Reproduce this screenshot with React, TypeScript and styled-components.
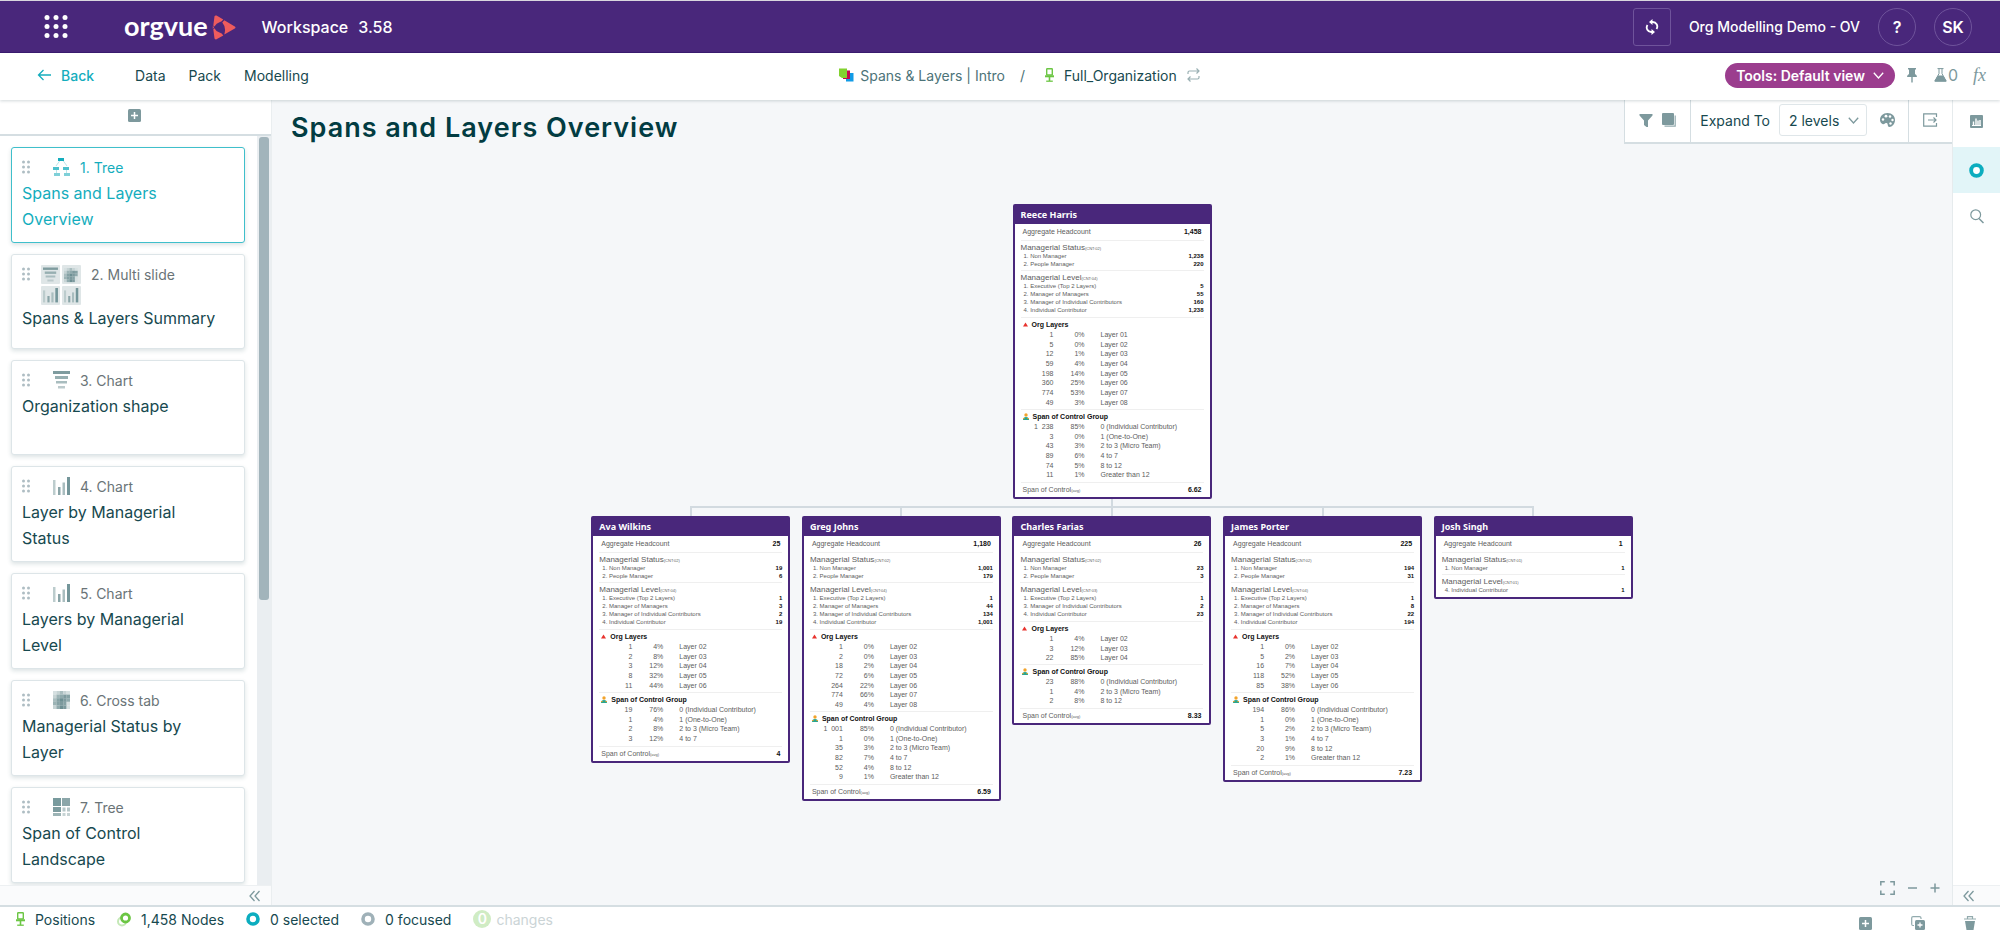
import React from "react";
import styled, { createGlobalStyle } from "styled-components";

const ink = "#17494f";
const muted = "#7d999d";
const teal = "#14adbd";
const purple = "#49277b";
const line = "#d5dee2";

const GlobalStyle = createGlobalStyle`
  *, *::before, *::after { box-sizing: border-box; }
  body {
    margin: 0;
    font-family: Inter, "Liberation Sans", sans-serif;
    font-size: 14px;
    color: ${ink};
    background: #fff;
  }
  button, select { font: inherit; color: inherit; }
  button { border: 0; padding: 0; background: none; display: inline-flex; align-items: center; justify-content: center; cursor: pointer; }
  a { color: inherit; text-decoration: none; }
  h1, h2, h3, p { margin: 0; font-weight: inherit; font-size: inherit; }
  ul, ol { margin: 0; padding: 0; list-style: none; }
  svg { display: block; flex: none; }
`;

/* ---------- page frame ---------- */

const Page = styled.div`
  display: flex;
  flex-direction: column;
  height: 100vh;
  min-height: 600px;
  overflow: hidden;
`;

const TopBar = styled.header`
  display: flex;
  align-items: center;
  flex: none;
  height: 53px;
  padding: 0 28px 0 44px;
  color: #fff;
  background: ${purple};
  border-top: 1px solid #d9d6de;
  border-bottom: 1px solid #3a1a70;
`;

const Brand = styled.a`
  display: flex;
  align-items: center;
  gap: 4px;
  margin-left: 56px;
  font: 700 27px/36px Lato, "Liberation Sans", sans-serif;
  svg { margin-top: 1px; }
`;

const BrandName = styled.span`
  height: 38px;
`;

const Product = styled.p`
  display: flex;
  gap: 10px;
  margin-left: 26px;
  font-size: 16px;
  font-weight: 500;
`;

const TopRight = styled.div`
  display: flex;
  align-items: center;
  gap: 18px;
  margin-left: auto;
`;

const Outlined = styled.button<{ $round?: boolean }>`
  width: 38px;
  height: 38px;
  border: 1px solid #6f539b;
  border-radius: ${(p) => (p.$round ? "50%" : "3px")};
  font-size: 16px;
  font-weight: 600;
`;

const Tenant = styled.span`
  font-size: 14px;
  font-weight: 500;
`;

const NavBar = styled.nav`
  position: relative;
  display: grid;
  grid-template-columns: 1fr auto 1fr;
  align-items: center;
  flex: none;
  height: 47px;
  padding: 0 14px 3px 37px;
  background: #fff;
  box-shadow: 0 1px 3px rgba(30, 60, 70, 0.2);
`;

const NavGroup = styled.div<{ $end?: boolean }>`
  display: flex;
  align-items: center;
  gap: ${(p) => (p.$end ? "12px" : "23px")};
  justify-content: ${(p) => (p.$end ? "flex-end" : "flex-start")};
`;

const BackLink = styled.a`
  display: flex;
  align-items: center;
  gap: 9px;
  margin-right: 18px;
  color: ${teal};
  font-weight: 500;
`;

const Crumbs = styled.div`
  display: flex;
  align-items: center;
  margin-left: 16px;
  color: #4c7378;
`;

const Crumb = styled.a<{ $current?: boolean }>`
  display: flex;
  align-items: center;
  gap: ${(p) => (p.$current ? "10px" : "6px")};
  color: ${(p) => (p.$current ? ink : "#4c7378")};
`;

const Slash = styled.span`
  margin: 0 20px 0 15px;
`;

const SwapButton = styled.button`
  margin-left: 10px;
`;

const ToolsButton = styled.button`
  gap: 8px;
  height: 25px;
  padding: 0 11px;
  border-radius: 13px;
  color: #fff;
  font-weight: 600;
  background: #9b3d8e;
`;

const Flask = styled.button`
  gap: 1px;
  color: ${muted};
  font-size: 16px;
  margin: 0 3px 0 5px;
`;

const Body = styled.div`
  display: flex;
  flex: 1;
  min-height: 0;
`;

/* ---------- slide list ---------- */

const Slides = styled.aside`
  display: flex;
  flex-direction: column;
  flex: none;
  width: 272px;
  border-right: 1px solid #eaeef0;
`;

const AddSlide = styled.div`
  display: flex;
  justify-content: center;
  align-items: center;
  flex: none;
  height: 36px;
  padding: 0 2px 3px 0;
  border-bottom: 2px solid ${line};
`;

const SlideScroll = styled.div`
  display: flex;
  flex: 1;
  min-height: 0;
  overflow: hidden;
`;

const SlideList = styled.ol`
  display: flex;
  flex-direction: column;
  flex: 1;
  gap: 11px;
  padding: 11px 12px 0 11px;
`;

const Track = styled.div`
  width: 14px;
  padding: 1px 2px;
  background: #eaeef1;
`;

const Thumb = styled.div`
  height: 62%;
  border-radius: 3px;
  background: #a2b4bb;
`;

const SlideCard = styled.li<{ $active?: boolean }>`
  flex: none;
  min-height: 95px;
  padding: 10px;
  color: ${(p) => (p.$active ? teal : ink)};
  border: 1px solid ${(p) => (p.$active ? "#3fbfcb" : "#dde5e8")};
  border-radius: 3px;
  box-shadow: 0 2px 4px rgba(40, 80, 90, 0.16);
  background: #fff;
`;

const SlideMeta = styled.div<{ $active?: boolean }>`
  display: flex;
  align-items: flex-start;
  min-height: 22px;
  line-height: 20px;
  color: ${(p) => (p.$active ? teal : "#6a7477")};
`;

const Glyph = styled.span<{ $wide?: boolean }>`
  margin: 0 10px 0 ${(p) => (p.$wide ? "11px" : "23px")};
`;

const Grip = styled.span`
  padding-top: 2px;
`;

const SlideTitle = styled.h3`
  padding-right: 12px;
  font-size: 16px;
  line-height: 26px;
`;

const Collapse = styled.div<{ $left?: boolean }>`
  display: flex;
  align-items: center;
  justify-content: ${(p) => (p.$left ? "flex-start" : "flex-end")};
  flex: none;
  height: 20px;
  padding: 0 11px 0 10px;
  background: #fafbfc;
  border-top: 1px solid #edf0f2;
`;

/* ---------- canvas ---------- */

const Canvas = styled.main`
  display: flex;
  flex-direction: column;
  flex: 1;
  min-width: 0;
  background: #f5f7f9;
`;

const CanvasHead = styled.div`
  display: flex;
  justify-content: space-between;
  align-items: flex-start;
`;

const Title = styled.h1`
  padding: 10px 0 0 19px;
  font-size: 27px;
  line-height: 36px;
  font-weight: 600;
  letter-spacing: 1px;
  color: #023c42;
`;

const Toolbar = styled.div`
  display: flex;
  height: 44px;
  background: #fff;
  border: solid ${line};
  border-width: 0 0 2px 1px;
`;

const ToolCell = styled.div`
  display: flex;
  align-items: center;
  gap: 9px;
  padding: 0 14px 2px;
  & + & { border-left: 1px solid ${line}; padding-left: 9px; padding-right: 13px; }
  & + & + & { padding-left: 14px; padding-right: 14px; }
`;

const SelectBox = styled.span`
  position: relative;
  margin-right: 4px;
  select {
    appearance: none;
    width: 88px;
    height: 32px;
    padding: 0 0 0 9px;
    border: 1px solid #dfe6e9;
    border-radius: 3px;
    background: #fff;
  }
  svg { position: absolute; right: 8px; top: 13px; pointer-events: none; }
`;

const Tree = styled.div`
  display: flex;
  flex-direction: column;
  align-items: center;
  width: 1042px;
  margin: 58px auto 0;
`;

const Stub = styled.div`
  width: 2px;
  height: 8px;
  background: #d2dae0;
`;

const Trunk = styled(Stub)`
  height: 7px;
`;

const Rail = styled.div`
  align-self: stretch;
  height: 2px;
  margin: 0 99px;
  background: #d2dae0;
`;

const Reports = styled.div`
  display: grid;
  grid-template-columns: repeat(5, 1fr);
  gap: 11px;
  align-self: stretch;
  align-items: start;
`;

const Branch = styled.div`
  display: flex;
  flex-direction: column;
  align-items: center;
`;

const Node = styled.article`
  width: 199px;
  border: 2px solid ${purple};
  border-radius: 2px;
  color: #5d5d5d;
  background: #fff;
  font: 7px/10px "Liberation Sans", Arial, sans-serif;
`;

const NodeName = styled.h2`
  height: 18px;
  padding-left: 6px;
  color: #fff;
  background: ${purple};
  font: 700 9px/18px "Noto Sans", "Liberation Sans", sans-serif;
`;

const Block = styled.section<{ $foot?: number }>`
  margin: 0 6px;
  padding-bottom: ${(p) => p.$foot ?? 0}px;
  & + & { border-top: 1px solid #efefef; }
`;

const Figure = styled.p<{ $last?: boolean }>`
  display: flex;
  justify-content: space-between;
  height: ${(p) => (p.$last ? "14px" : "16px")};
  padding: ${(p) => (p.$last ? "1px" : "2px")} 2px 0;
  line-height: 11px;
  b { color: #111; }
  small { font-size: 4px; }
`;

const GroupTitle = styled.h3<{ $strong?: boolean }>`
  display: flex;
  align-items: center;
  gap: ${(p) => (p.$strong ? "4px" : "0")};
  height: 11px;
  padding: ${(p) => (p.$strong ? "2px 0 0 2px" : "2px 0 0")};
  font-size: ${(p) => (p.$strong ? "7px" : "8px")};
  font-weight: ${(p) => (p.$strong ? 700 : 400)};
  color: ${(p) => (p.$strong ? "#111" : "#5d5d5d")};
  small { font-size: 4px; padding-top: 2px; }
`;

const CountRow = styled.p`
  display: flex;
  justify-content: space-between;
  padding-left: 3px;
  font-size: 6px;
  line-height: 8px;
  b { color: #111; }
`;

const ShareTable = styled.table`
  border-collapse: collapse;
  td { padding: 0; height: 10px; line-height: 9px; text-align: right; white-space: pre; }
  tr:nth-child(3n) td { height: 9px; }
  td:nth-child(1) { width: 33px; }
  td:nth-child(2) { width: 31px; }
  td:nth-child(3) { padding-left: 16px; text-align: left; }
`;

const ZoomTools = styled.div`
  display: flex;
  align-items: center;
  justify-content: flex-end;
  gap: 11px;
  margin-top: auto;
  padding: 0 12px 10px;
`;

/* ---------- right rail and status bar ---------- */

const SideRail = styled.aside`
  display: flex;
  flex-direction: column;
  flex: none;
  width: 48px;
  border-left: 1px solid #e6ebed;
  background: #fff;
`;

const RailButton = styled.button<{ $active?: boolean }>`
  flex: none;
  height: 46px;
  background: ${(p) => (p.$active ? "#e2f5f8" : "transparent")};
  &:first-child { height: 47px; padding-bottom: 4px; }
`;

const RailFill = styled.div`
  flex: 1;
`;

const StatusBar = styled.footer`
  display: flex;
  align-items: center;
  flex: none;
  gap: 22px;
  height: 34px;
  padding: 0 24px 8px 16px;
  border-top: 2px solid ${line};
  background: #fff;
`;

const Status = styled.span<{ $faded?: boolean }>`
  display: flex;
  align-items: center;
  gap: ${(p) => (p.$faded ? "5px" : "10px")};
  color: ${(p) => (p.$faded ? "#cbd4d6" : ink)};
`;

const ChangeCount = styled.span`
  width: 18px;
  height: 18px;
  border-radius: 50%;
  color: #fff;
  font-size: 14px;
  font-weight: 600;
  line-height: 18px;
  text-align: center;
  background: #d0ecc4;
`;

const StatusTools = styled.div`
  display: flex;
  align-items: center;
  gap: 39px;
  margin: 8px 0 0 auto;
`;

/* ---------- icons ---------- */

const AppsIcon = () => (
  <svg width="24" height="25" viewBox="0 0 24 25" fill="#fff">
    {[3, 12, 21].map((y) => [3, 12, 21].map((x) => <circle key={`${x}-${y}`} cx={x} cy={y + 0.5} r="2.5" />))}
  </svg>
);

const BrandMark = () => (
  <svg width="24" height="25" viewBox="0 0 24 25" fill="#ee5b5d">
    <path d="M2.500 1.200Q3.200 0 4.500.6L11.300 4.500Q10 6.800 7.500 7.200 4.500 8 2.400 11.500L1.300 10.500z" />
    <path d="M1.300 14.200 2.400 13.200Q4.500 17 7.500 17.600 10 18 11.300 20.400L4.500 24.200Q3.200 24.800 2.500 23.600z" />
    <path d="M12.300 5.200 22.800 11.400Q24.200 12.400 22.800 13.400L12.300 19.500Q14.500 12.300 10.300 7.400z" />
    <path d="M.8 10.800 2 12.300.8 13.900z" />
  </svg>
);

const SyncIcon = () => (
  <svg width="14" height="16" viewBox="0 0 14 16" fill="none" stroke="#fff" strokeWidth="1.800">
    <path d="M6.500 3H7.500a4.500 4.500 0 0 1 4 7M7.500 13H6.500a4.500 4.500 0 0 1-4-7" />
    <path d="M7.500 0v6L4 3zM6.500 16v-6L10 13z" fill="#fff" stroke="none" />
  </svg>
);

const ArrowLeft = () => (
  <svg width="15" height="12" viewBox="0 0 15 12" fill="none" stroke={teal} strokeWidth="1.300">
    <path d="M6.500 1 1.500 6l5 5M1.500 6H14" />
  </svg>
);

const PackIcon = () => (
  <svg width="15" height="14" viewBox="0 0 15 14">
    <rect x="7" y="5" width="7.500" height="8.500" fill="#129be6" />
    <rect x="4" y="2.500" width="7" height="8.500" fill="#c4064f" />
    <path d="M0 .5h8v9.500H3L0 8z" fill="#82d12f" />
  </svg>
);

const ChairIcon = () => (
  <svg width="9" height="14" viewBox="0 0 9 14" fill="none" stroke="#6cc644">
    <rect x="1.700" y=".7" width="5.600" height="6.300" rx=".5" strokeWidth="1.400" />
    <path d="M0 8.300h9" strokeWidth="2" />
    <path d="M4.500 8v5" strokeWidth="1.600" />
    <path d="M1.200 13.200h6.600" strokeWidth="1.300" />
  </svg>
);

const SwapIcon = () => (
  <svg width="13" height="14" viewBox="0 0 13 14" fill="none" stroke="#9ab0b3" strokeWidth="1.200">
    <path d="M1 6V4.500Q1 3 2.500 3H12M9.500.5 12 3 9.500 5.500M12 8v1.500Q12 11 10.500 11H1M3.500 8.500 1 11l2.500 2.500" />
  </svg>
);

const Chevron = ({ color }: { color: string }) => (
  <svg width="11" height="7" viewBox="0 0 11 7" fill="none" stroke={color} strokeWidth="1.300">
    <path d="M.8.8 5.500 6 10.200.8" />
  </svg>
);

const PinIcon = () => (
  <svg width="10" height="15" viewBox="0 0 10 15" fill={muted}>
    <path d="M1 0h8v1.500H8V6q2 1 2 3H0q0-2 2-3V1.500H1zM4.300 9h1.400v5L5 15l-.7-1z" />
  </svg>
);

const FlaskIcon = () => (
  <svg width="13" height="14" viewBox="0 0 13 14" fill="none" stroke={muted}>
    <path d="M3.500.6h6M5 .6v5L.8 13.200h11.400L8 5.600v-5" />
    <path d="M4 8h5l3 5H1z" fill={muted} />
  </svg>
);

const Fx = styled.i`
  font: italic 18px/18px "Liberation Serif", serif;
  color: ${muted};
`;

const PlusSquare = () => (
  <svg width="13" height="13" viewBox="0 0 13 13">
    <rect width="13" height="13" rx="1.500" fill={muted} />
    <path d="M6.500 3v7M3 6.500h7" stroke="#fff" strokeWidth="1.500" />
  </svg>
);

const GripIcon = () => (
  <svg width="8" height="14" viewBox="0 0 8 14" fill="#aebdc3">
    {[2, 7, 12].map((y) => [1.5, 6.5].map((x) => <circle key={`${x}-${y}`} cx={x} cy={y} r="1.500" />))}
  </svg>
);

const DoubleChevron = () => (
  <svg width="11" height="12" viewBox="0 0 11 12" fill="none" stroke={muted} strokeWidth="1.300">
    <path d="M5.500 1 1 6l4.500 5M10.500 1 6 6l4.500 5" />
  </svg>
);

const TreeGlyph = () => (
  <svg width="17" height="18" viewBox="0 0 17 18">
    <path d="M7 2.500 3 8M10 2.500 14 8M3.500 10v6M13.500 10v6" stroke="#b9e6eb" />
    <path d="M5 0h6v3H5z" fill={teal} />
    <path d="M0 9h6v3H0zM10 9h6v3h-6z" fill="#4cc0cc" />
    <path d="M1 15h6v3H1zM11 15h6v3h-6z" fill="#7fd0d8" />
  </svg>
);

const FunnelBars = () => (
  <>
    <path d="M0 0h17v3H0z" fill="#7f9c9f" />
    <path d="M2 5h13v3H2z" fill="#97afb1" />
    <path d="M3 10h11v2.500H3z" fill="#a9bdbf" />
    <path d="M5 15h7v2.500H5z" fill="#bccacc" />
  </>
);

const ColumnBars = () => (
  <>
    <path d="M0 3h2.500v15H0z" fill="#bccccd" />
    <path d="M5 10h2.500v8H5z" fill="#8aa5a8" />
    <path d="M9.500 5.500H12V18H9.500z" fill="#a9bdbf" />
    <path d="M14 0h3v18h-3z" fill="#74969a" />
  </>
);

const FunnelGlyph = () => (
  <svg width="17" height="18" viewBox="0 0 17 18"><FunnelBars /></svg>
);

const ColumnGlyph = () => (
  <svg width="17" height="18" viewBox="0 0 17 18"><ColumnBars /></svg>
);

const heat = ["cb9bc", "b8756", "96457", "8656c", "b745c"];
const shade: Record<string, string> = {
  c: "#d6e0e1", b: "#c6d3d4", "9": "#a9bdbf", "8": "#9cb3b5", "7": "#90aaad", "6": "#86a2a5", "5": "#7d9a9e", "4": "#6d8f93",
};

const HeatCells = () => (
  <>
    {heat.map((row, y) =>
      row.split("").map((c, x) => <rect key={`${x}-${y}`} x={x * 3.4} y={y * 3.6} width="3.500" height="3.700" fill={shade[c]} />)
    )}
  </>
);

const CrossGlyph = () => (
  <svg width="17" height="18" viewBox="0 0 17 18"><HeatCells /></svg>
);

const TreemapGlyph = () => (
  <svg width="17" height="18" viewBox="0 0 17 18" fill="#8ba6a9">
    <path d="M0 0h8v8H0z" fill="#789a9d" />
    <path d="M9 0h8v8H9z" />
    <path d="M0 9h8v5H0z" fill="#7d9c9f" />
    <path d="M0 15h8v3H0z" fill="#9cb3b5" />
    <path d="M9.500 9.500h3v4h-3zM14 9.500h3v4h-3z" fill="#b5c6c8" />
    <path d="M9.500 15h3v3h-3zM14 15h3v3h-3z" fill="#c6d3d4" />
  </svg>
);

const MultiGlyph = () => (
  <svg width="40" height="40" viewBox="0 0 40 40">
    {[[0, 0], [21, 0], [0, 21], [21, 21]].map(([x, y]) => (
      <rect key={`${x}-${y}`} x={x} y={y} width="19" height="19" rx="1" fill="#dfe6e7" />
    ))}
    <g transform="translate(2 2.500) scale(.88 .8)"><FunnelBars /></g>
    <g transform="translate(23 3) scale(.8 .78)"><HeatCells /></g>
    <g transform="translate(2 23) scale(.88 .8)"><ColumnBars /></g>
    <g transform="translate(23 23) scale(.84 .8)"><ColumnBars /></g>
  </svg>
);

const FilterIcon = () => (
  <svg width="14" height="13" viewBox="0 0 14 13" fill={muted}>
    <path d="M.5 0h13v1.500L9 6.500V13H7.500L5 11V6.500L.5 1.500z" />
  </svg>
);

const LayersIcon = () => (
  <svg width="14" height="14" viewBox="0 0 14 14">
    <path d="M13.200 2.500v10.700H2.500" fill="none" stroke="#93abae" strokeWidth="1.200" />
    <rect width="12" height="12" rx="1" fill={muted} />
  </svg>
);

const PaletteIcon = () => (
  <svg width="15" height="14" viewBox="0 0 15 14">
    <path d="M7.500 0C12 0 15 3 15 7s-3 7-5.500 7C7 14 8.500 10.500 6.500 10 4.500 9.500 4.500 12 2.500 11 .8 10 0 8.500 0 7c0-4 3-7 7.500-7z" fill={muted} />
    <g fill="#fff">
      <circle cx="6" cy="3.200" r="1.400" />
      <circle cx="10" cy="3.500" r="1.300" />
      <circle cx="3" cy="6.500" r="1.200" />
      <circle cx="12.500" cy="7" r="1.200" />
      <circle cx="10.500" cy="10.500" r="1.200" />
    </g>
  </svg>
);

const ExportIcon = () => (
  <svg width="15" height="14" viewBox="0 0 15 14" fill="none" stroke={muted} strokeWidth="1.200">
    <path d="M13.500 4V.8H.7v12.400h12.800V10M5 7h8M10.500 4.500 13 7l-2.500 2.500" />
  </svg>
);

const PanelChartIcon = () => (
  <svg width="13" height="13" viewBox="0 0 13 13">
    <rect width="13" height="13" rx="1" fill={muted} />
    <path d="M3.500 10V6.500M6 10V3.500M8 10V5.500M10 10V5" stroke="#fff" strokeWidth="1.400" />
    <path d="M2 10.500h9" stroke="#fff" />
  </svg>
);

const RingIcon = ({ color, size = 14 }: { color: string; size?: number }) => (
  <svg width={size} height={size} viewBox="0 0 14 14">
    <circle cx="7" cy="7" r="5" fill="#fff" stroke={color} strokeWidth="3.600" />
  </svg>
);

const SearchIcon = () => (
  <svg width="14" height="15" viewBox="0 0 14 15" fill="none" stroke={muted} strokeWidth="1.200">
    <circle cx="5.700" cy="5.700" r="4.900" />
    <path d="m9 9.500 4.500 4.500" strokeWidth="1.500" />
  </svg>
);

const FitIcon = () => (
  <svg width="15" height="14" viewBox="0 0 15 14" fill="none" stroke={muted} strokeWidth="1.500">
    <path d="M.8 4.500V.8h4M10.200.8h4v3.700M14.200 9.500v3.700h-4M4.800 13.200h-4V9.500" />
  </svg>
);

const MinusIcon = () => (
  <svg width="13" height="10" viewBox="0 0 13 10" stroke={muted} strokeWidth="1.500"><path d="M2 5h9" /></svg>
);

const PlusIcon = () => (
  <svg width="10" height="10" viewBox="0 0 10 10" stroke={muted} strokeWidth="1.500"><path d="M.5 5h9M5 .5v9" /></svg>
);

const NodesIcon = () => (
  <svg width="14" height="15" viewBox="0 0 14 15" fill="none">
    <circle cx="5" cy="9.500" r="4" stroke="#c4e8b6" strokeWidth="2" />
    <circle cx="8.500" cy="6" r="4" fill="#fff" stroke="#6cc644" strokeWidth="2.800" />
  </svg>
);

const CopyAddIcon = () => (
  <svg width="14" height="14" viewBox="0 0 14 14">
    <path d="M3 9.500H2Q.7 9.500.7 8V2Q.7.700 2 .7h6.500Q10 .7 10 2v1" fill="none" stroke="#92abae" strokeWidth="1.200" />
    <rect x="4" y="4" width="10" height="10" rx="1.500" fill={muted} />
    <path d="M9 6.500v5M6.500 9h5" stroke="#fff" strokeWidth="1.300" />
  </svg>
);

const TrashIcon = () => (
  <svg width="12" height="14" viewBox="0 0 12 14">
    <path d="M3.500 2.500V.6h5v1.900M0 3h12" fill="none" stroke="#93abae" strokeWidth="1.200" />
    <path d="M1 5h10l-1.500 9h-7z" fill={muted} />
  </svg>
);

const RedTriangle = () => (
  <svg width="5" height="5" viewBox="0 0 5 5"><path d="M2.500.5 5 4.500H0z" fill="#e8322d" /></svg>
);

const PersonIcon = () => (
  <svg width="6" height="7" viewBox="0 0 6 7">
    <circle cx="3" cy="2" r="1.700" fill="#f2a32b" />
    <path d="M0 7q0-3 3-3t3 3z" fill="#2ba58d" />
    <path d="M0 5.500h1.500M4.500 5.500H6" stroke="#f2a32b" />
  </svg>
);

/* ---------- data ---------- */

type Pair = [string, string];
type Share = [string, string, string];

interface Person {
  name: string;
  headcount: string;
  status: Pair[];
  level: Pair[];
  layers?: Share[];
  spans?: Share[];
  span?: string;
}

const NM = "1. Non Manager";
const PM = "2. People Manager";
const L1 = "1. Executive (Top 2 Layers)";
const L2 = "2. Manager of Managers";
const L3 = "3. Manager of Individual Contributors";
const L4 = "4. Individual Contributor";
const S0 = "0 (Individual Contributor)";
const S1 = "1 (One-to-One)";
const S2 = "2 to 3 (Micro Team)";
const S4 = "4 to 7";
const S8 = "8 to 12";
const S12 = "Greater than 12";

const lead: Person = {
  name: "Reece Harris",
  headcount: "1,458",
  status: [[NM, "1,238"], [PM, "220"]],
  level: [[L1, "5"], [L2, "55"], [L3, "160"], [L4, "1,238"]],
  layers: [
    ["1", "0%", "Layer 01"], ["5", "0%", "Layer 02"], ["12", "1%", "Layer 03"], ["59", "4%", "Layer 04"],
    ["198", "14%", "Layer 05"], ["360", "25%", "Layer 06"], ["774", "53%", "Layer 07"], ["49", "3%", "Layer 08"],
  ],
  spans: [["1  238", "85%", S0], ["3", "0%", S1], ["43", "3%", S2], ["89", "6%", S4], ["74", "5%", S8], ["11", "1%", S12]],
  span: "6.62",
};

const reports: Person[] = [
  {
    name: "Ava Wilkins",
    headcount: "25",
    status: [[NM, "19"], [PM, "6"]],
    level: [[L1, "1"], [L2, "3"], [L3, "2"], [L4, "19"]],
    layers: [["1", "4%", "Layer 02"], ["2", "8%", "Layer 03"], ["3", "12%", "Layer 04"], ["8", "32%", "Layer 05"], ["11", "44%", "Layer 06"]],
    spans: [["19", "76%", S0], ["1", "4%", S1], ["2", "8%", S2], ["3", "12%", S4]],
    span: "4",
  },
  {
    name: "Greg Johns",
    headcount: "1,180",
    status: [[NM, "1,001"], [PM, "179"]],
    level: [[L1, "1"], [L2, "44"], [L3, "134"], [L4, "1,001"]],
    layers: [
      ["1", "0%", "Layer 02"], ["2", "0%", "Layer 03"], ["18", "2%", "Layer 04"], ["72", "6%", "Layer 05"],
      ["264", "22%", "Layer 06"], ["774", "66%", "Layer 07"], ["49", "4%", "Layer 08"],
    ],
    spans: [["1  001", "85%", S0], ["1", "0%", S1], ["35", "3%", S2], ["82", "7%", S4], ["52", "4%", S8], ["9", "1%", S12]],
    span: "6.59",
  },
  {
    name: "Charles Farias",
    headcount: "26",
    status: [[NM, "23"], [PM, "3"]],
    level: [[L1, "1"], [L3, "2"], [L4, "23"]],
    layers: [["1", "4%", "Layer 02"], ["3", "12%", "Layer 03"], ["22", "85%", "Layer 04"]],
    spans: [["23", "88%", S0], ["1", "4%", S2], ["2", "8%", S8]],
    span: "8.33",
  },
  {
    name: "James Porter",
    headcount: "225",
    status: [[NM, "194"], [PM, "31"]],
    level: [[L1, "1"], [L2, "8"], [L3, "22"], [L4, "194"]],
    layers: [["1", "0%", "Layer 02"], ["5", "2%", "Layer 03"], ["16", "7%", "Layer 04"], ["118", "52%", "Layer 05"], ["85", "38%", "Layer 06"]],
    spans: [["194", "86%", S0], ["1", "0%", S1], ["5", "2%", S2], ["3", "1%", S4], ["20", "9%", S8], ["2", "1%", S12]],
    span: "7.23",
  },
  { name: "Josh Singh", headcount: "1", status: [[NM, "1"]], level: [[L4, "1"]] },
];

const slides = [
  { kind: "Tree", title: "Spans and Layers Overview", icon: <TreeGlyph /> },
  { kind: "Multi slide", title: "Spans & Layers Summary", icon: <MultiGlyph />, wide: true },
  { kind: "Chart", title: "Organization shape", icon: <FunnelGlyph /> },
  { kind: "Chart", title: "Layer by Managerial Status", icon: <ColumnGlyph /> },
  { kind: "Chart", title: "Layers by Managerial Level", icon: <ColumnGlyph /> },
  { kind: "Cross tab", title: "Managerial Status by Layer", icon: <CrossGlyph /> },
  { kind: "Tree", title: "Span of Control Landscape", icon: <TreemapGlyph /> },
];

/* ---------- composed parts ---------- */

const CountBlock = ({ title, rows, foot }: { title: string; rows: Pair[]; foot: number }) => (
  <Block $foot={foot}>
    <GroupTitle>{title}<small>(CNT:0{rows.length})</small></GroupTitle>
    {rows.map(([label, value]) => (
      <CountRow key={label}><span>{label}</span><b>{value}</b></CountRow>
    ))}
  </Block>
);

const ShareBlock = ({ title, icon, rows, foot }: { title: string; icon: React.ReactNode; rows: Share[]; foot: number }) => (
  <Block $foot={foot}>
    <GroupTitle $strong>{icon}{title}</GroupTitle>
    <ShareTable>
      <tbody>
        {rows.map(([count, share, label]) => (
          <tr key={label}><td>{count}</td><td>{share}</td><td>{label}</td></tr>
        ))}
      </tbody>
    </ShareTable>
  </Block>
);

const PersonNode = ({ person }: { person: Person }) => (
  <Node>
    <NodeName>{person.name}</NodeName>
    <Block>
      <Figure><span>Aggregate Headcount</span><b>{person.headcount}</b></Figure>
    </Block>
    <CountBlock title="Managerial Status" rows={person.status} foot={2} />
    <CountBlock title="Managerial Level" rows={person.level} foot={3} />
    {person.layers && <ShareBlock title="Org Layers" icon={<RedTriangle />} rows={person.layers} foot={2} />}
    {person.spans && <ShareBlock title="Span of Control Group" icon={<PersonIcon />} rows={person.spans} foot={3} />}
    {person.span && (
      <Block>
        <Figure $last><span>Span of Control<small>(avg)</small></span><b>{person.span}</b></Figure>
      </Block>
    )}
  </Node>
);

export default function App() {
  return (
    <>
      <GlobalStyle />
      <Page>
        <TopBar>
          <button aria-label="Apps"><AppsIcon /></button>
          <Brand href="#home"><BrandName>orgvue</BrandName><BrandMark /></Brand>
          <Product><span>Workspace</span><span>3.58</span></Product>
          <TopRight>
            <Outlined aria-label="Sync"><SyncIcon /></Outlined>
            <Tenant>Org Modelling Demo - OV</Tenant>
            <Outlined $round>?</Outlined>
            <Outlined $round>SK</Outlined>
          </TopRight>
        </TopBar>

        <NavBar>
          <NavGroup>
            <BackLink href="#back"><ArrowLeft />Back</BackLink>
            <a href="#data">Data</a>
            <a href="#pack">Pack</a>
            <a href="#modelling">Modelling</a>
          </NavGroup>
          <Crumbs>
            <Crumb href="#intro"><PackIcon />Spans &amp; Layers | Intro</Crumb>
            <Slash>/</Slash>
            <Crumb href="#organization" $current><ChairIcon />Full_Organization</Crumb>
            <SwapButton aria-label="Switch dataset"><SwapIcon /></SwapButton>
          </Crumbs>
          <NavGroup $end>
            <ToolsButton>Tools: Default view <Chevron color="#fff" /></ToolsButton>
            <button aria-label="Pin"><PinIcon /></button>
            <Flask aria-label="Scenarios"><FlaskIcon />0</Flask>
            <button aria-label="Expressions"><Fx>fx</Fx></button>
          </NavGroup>
        </NavBar>

        <Body>
          <Slides>
            <AddSlide><button aria-label="Add slide"><PlusSquare /></button></AddSlide>
            <SlideScroll>
              <SlideList>
                {slides.map((s, i) => (
                  <SlideCard key={s.title} $active={i === 0}>
                    <SlideMeta $active={i === 0}>
                      <Grip><GripIcon /></Grip>
                      <Glyph $wide={s.wide}>{s.icon}</Glyph>
                      <span>{i + 1}. {s.kind}</span>
                    </SlideMeta>
                    <SlideTitle>{s.title}</SlideTitle>
                  </SlideCard>
                ))}
              </SlideList>
              <Track><Thumb /></Track>
            </SlideScroll>
            <Collapse><button aria-label="Collapse slides"><DoubleChevron /></button></Collapse>
          </Slides>

          <Canvas>
            <CanvasHead>
              <Title>Spans and Layers Overview</Title>
              <Toolbar>
                <ToolCell>
                  <button aria-label="Filter"><FilterIcon /></button>
                  <button aria-label="Layers"><LayersIcon /></button>
                </ToolCell>
                <ToolCell>
                  <label htmlFor="expand">Expand To</label>
                  <SelectBox>
                    <select id="expand" defaultValue="2">
                      <option value="1">1 level</option>
                      <option value="2">2 levels</option>
                      <option value="3">3 levels</option>
                    </select>
                    <Chevron color="#7d999d" />
                  </SelectBox>
                  <button aria-label="Colours"><PaletteIcon /></button>
                </ToolCell>
                <ToolCell>
                  <button aria-label="Export"><ExportIcon /></button>
                </ToolCell>
              </Toolbar>
            </CanvasHead>

            <Tree>
              <PersonNode person={lead} />
              <Trunk />
              <Rail />
              <Reports>
                {reports.map((p) => (
                  <Branch key={p.name}>
                    <Stub />
                    <PersonNode person={p} />
                  </Branch>
                ))}
              </Reports>
            </Tree>

            <ZoomTools>
              <button aria-label="Fit to screen"><FitIcon /></button>
              <button aria-label="Zoom out"><MinusIcon /></button>
              <button aria-label="Zoom in"><PlusIcon /></button>
            </ZoomTools>
          </Canvas>

          <SideRail>
            <RailButton aria-label="Charts"><PanelChartIcon /></RailButton>
            <RailButton aria-label="Selection" $active><RingIcon color="#0cadbf" size={15} /></RailButton>
            <RailButton aria-label="Search"><SearchIcon /></RailButton>
            <RailFill />
            <Collapse $left><button aria-label="Expand panel"><DoubleChevron /></button></Collapse>
          </SideRail>
        </Body>

        <StatusBar>
          <Status><ChairIcon />Positions</Status>
          <Status><NodesIcon />1,458 Nodes</Status>
          <Status><RingIcon color="#0cadbf" />0 selected</Status>
          <Status><RingIcon color="#9fb1b8" />0 focused</Status>
          <Status $faded><ChangeCount>0</ChangeCount>changes</Status>
          <StatusTools>
            <button aria-label="Add"><PlusSquare /></button>
            <button aria-label="Duplicate"><CopyAddIcon /></button>
            <button aria-label="Delete"><TrashIcon /></button>
          </StatusTools>
        </StatusBar>
      </Page>
    </>
  );
}
